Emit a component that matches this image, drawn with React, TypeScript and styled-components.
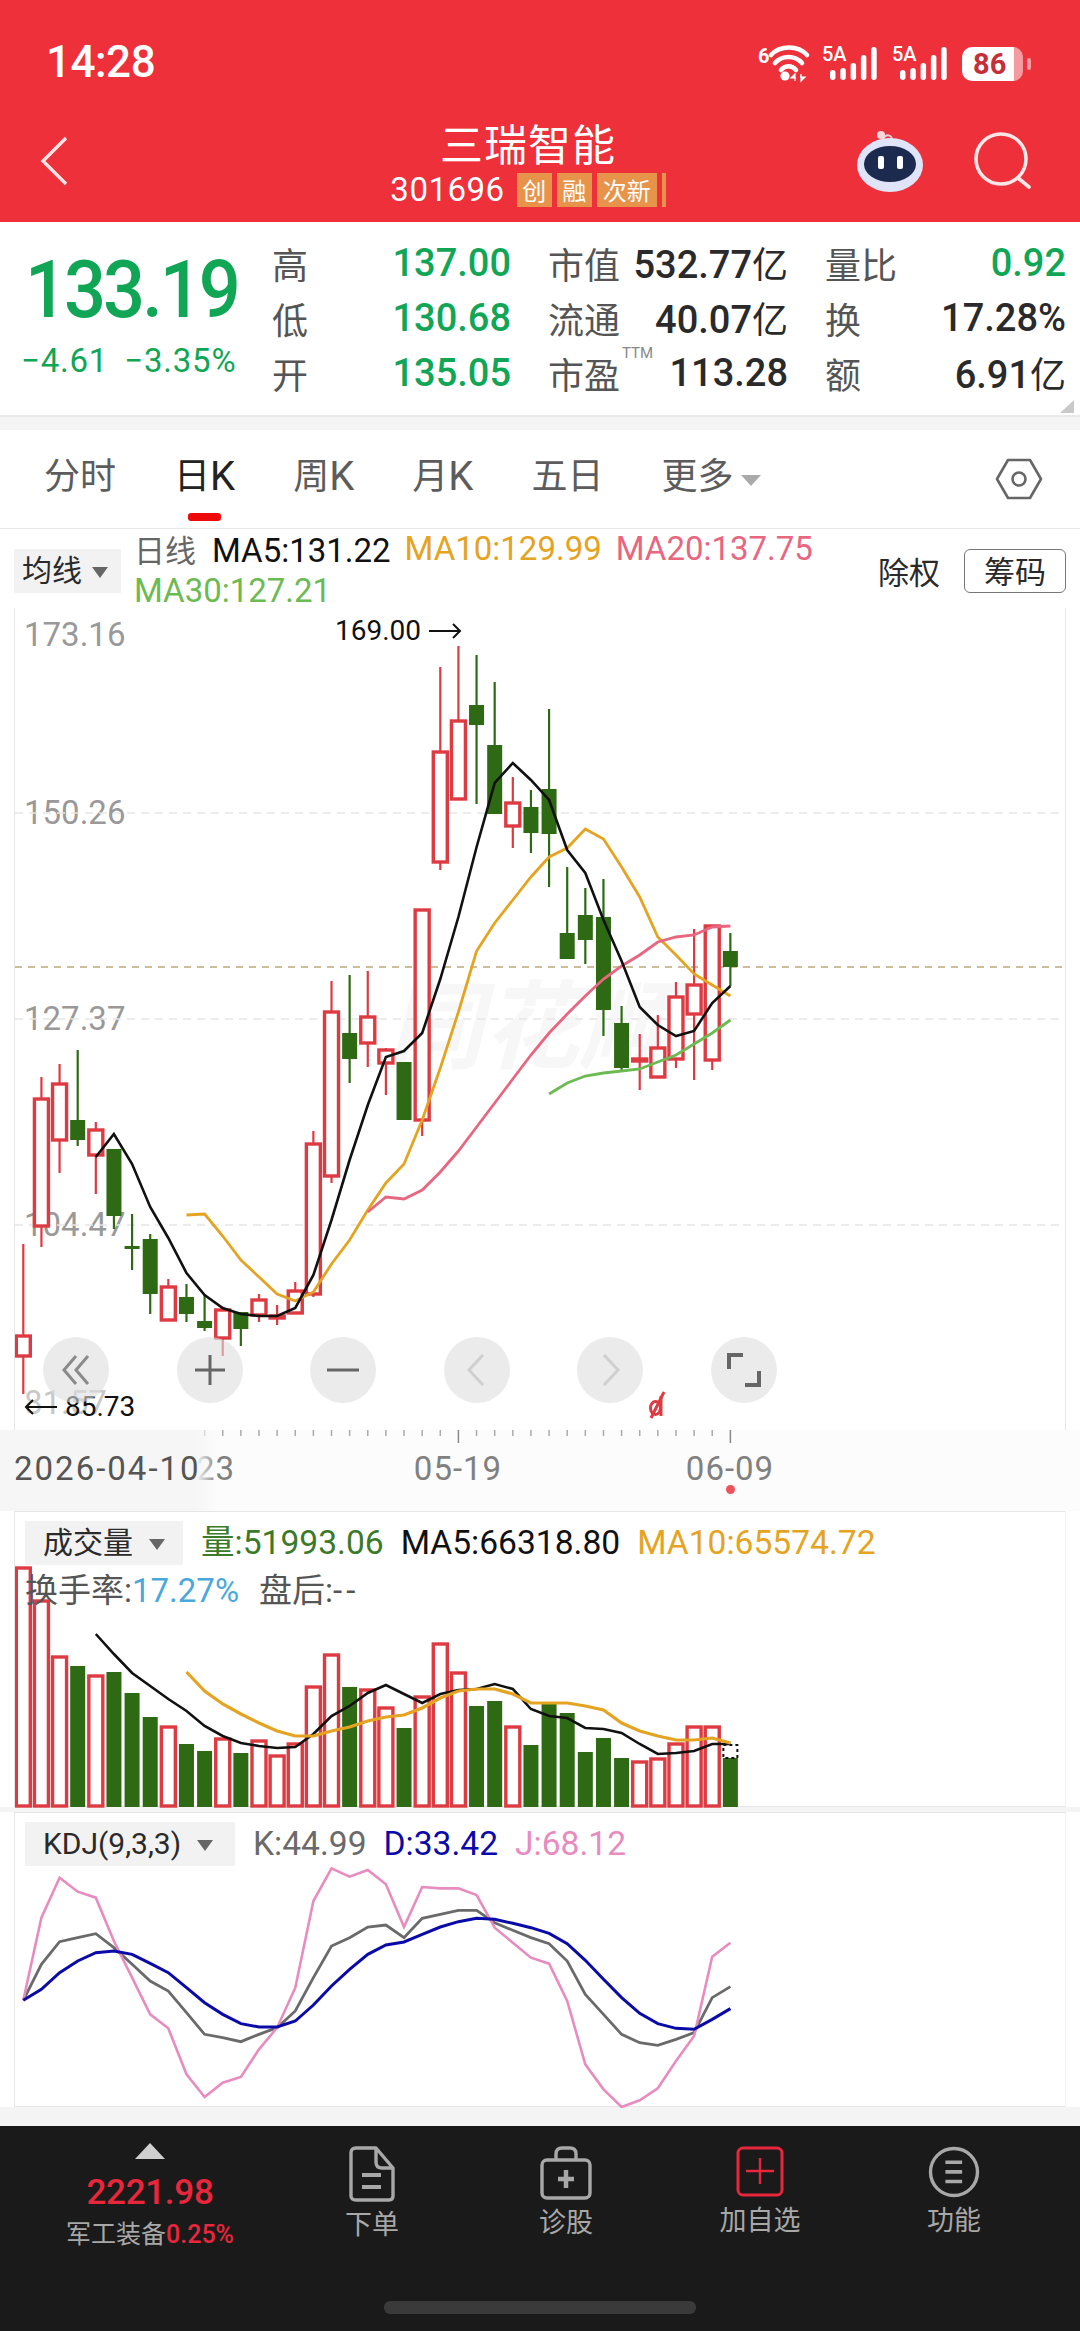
import React from "react";
import { styled, createGlobalStyle } from "styled-components";

const CJK = `"Noto Sans CJK SC", sans-serif`;
const NUM = `Roboto, "Noto Sans CJK SC", sans-serif`;

const GREEN = "#10a656";
const RED_UP = "#dd3a42";
const GREEN_DOWN = "#2e6a14";
const ORANGE = "#e5a322";
const PINK = "#e8667f";
const LIME = "#6cba52";

const GlobalStyle = createGlobalStyle`
  html, body {
    margin: 0;
    padding: 0;
    background: #fff;
    font-family: ${NUM};
  }
`;

const Page = styled.div`
  width: 1080px;
  height: 2331px;
  overflow: hidden;
  display: flex;
  flex-direction: column;
  background: #fff;
`;

/* ---------- red header ---------- */

const Header = styled.header`
  height: 222px;
  background: #ee303a;
  color: #fff;
  flex: none;
`;

const StatusBar = styled.div`
  height: 100px;
  padding: 0 57px 0 46px;
  box-sizing: border-box;
  display: flex;
  align-items: flex-start;
  justify-content: space-between;
`;

const Clock = styled.div`
  margin-top: 40px;
  font: 500 44px/44px Roboto, sans-serif;
  letter-spacing: -0.5px;
`;

const StatusIcons = styled.div`
  margin-top: 45px;
  display: flex;
  align-items: flex-start;
  gap: 12px;
`;

const StatusIcon = styled.svg`
  display: block;
  overflow: visible;
`;

const Battery = styled.div`
  position: relative;
  margin-top: 2px;
  width: 61px;
  height: 34px;
  border-radius: 10px;
  background: linear-gradient(90deg, #fff 86%, #f59aa0 86%);
  color: #c42f3a;
  font: 700 29px/34px Roboto, sans-serif;
  padding-left: 11px;
  box-sizing: border-box;

  &::after {
    content: "";
    position: absolute;
    left: 65px;
    top: 11px;
    width: 4px;
    height: 12px;
    border-radius: 2px;
    background: #f59aa0;
  }
`;

const NavBar = styled.div`
  height: 122px;
  display: grid;
  grid-template-columns: 380px 296px 1fr;
  align-items: center;
`;

const BackSlot = styled.div`
  padding-left: 40px;
  display: flex;
  align-items: center;
`;

const NavTitleBox = styled.div`
  display: flex;
  flex-direction: column;
  align-items: center;
  padding-top: 2px;
`;

const StockName = styled.div`
  font: 400 43px/50px ${CJK};
  letter-spacing: 1px;
  white-space: nowrap;
`;

const CodeRow = styled.div`
  margin-top: 5px;
  display: flex;
  align-items: center;
  gap: 5px;
  white-space: nowrap;
`;

const StockCode = styled.span`
  font: 400 33px/36px Roboto, sans-serif;
  margin-right: 7px;
  letter-spacing: 0.5px;
`;

const Tag = styled.span<{ $w: number }>`
  width: ${(p) => p.$w}px;
  height: 34px;
  background: #e8934a;
  color: #fff;
  font: 400 24px/34px ${CJK};
  text-align: center;
`;

const TagEdge = styled.span`
  width: 4px;
  height: 34px;
  background: #e8934a;
`;

const NavActions = styled.div`
  display: flex;
  justify-content: flex-end;
  align-items: center;
  padding-right: 48px;
  gap: 50px;
`;

/* ---------- quote ---------- */

const Quote = styled.section`
  height: 195px;
  box-sizing: border-box;
  border-bottom: 2px solid #e9e9e9;
  flex: none;
  display: flex;
  padding-top: 14px;
`;

const PriceBlock = styled.div`
  width: 272px;
  flex: none;
  padding-left: 21px;
  box-sizing: border-box;
  color: ${GREEN};
`;

const BigPrice = styled.div`
  font: 500 74px/80px Roboto, sans-serif;
  letter-spacing: -3px;
  margin-top: 14px;
  padding-left: 4px;
  transform: scaleY(1.08);
`;

const Change = styled.div`
  margin-top: 13px;
  display: flex;
  gap: 16px;
  font: 400 33px/36px Roboto, sans-serif;
  letter-spacing: 0.8px;
`;

const QuoteGrid = styled.div`
  display: grid;
  grid-template-columns: 239px 240px 241px;
  grid-auto-rows: 55px;
  column-gap: 37px;
`;

const QuoteCell = styled.div`
  display: flex;
  justify-content: space-between;
  align-items: center;
  white-space: nowrap;
`;

const QuoteLabel = styled.span`
  position: relative;
  font: 400 36px/55px ${CJK};
  color: #555;
`;

const Ttm = styled.sup`
  position: absolute;
  left: 74px;
  top: -2px;
  font: 400 15px/18px Roboto, sans-serif;
  color: #888;
`;

const QuoteValue = styled.span<{ $green?: boolean }>`
  font: 500 38px/55px ${NUM};
  color: ${(p) => (p.$green ? GREEN : "#2a2a2a")};
`;

const Unit = styled.span`
  font: 400 36px/55px ${CJK};
`;

const Corner = styled.div`
  position: absolute;
  left: 1060px;
  top: 400px;
  width: 0;
  height: 0;
  border-left: 14px solid transparent;
  border-bottom: 13px solid #c9c9c9;
`;

const Strip = styled.div<{ $h: number }>`
  height: ${(p) => p.$h}px;
  background: #f4f4f4;
  flex: none;
`;

/* ---------- tabs ---------- */

const Tabs = styled.nav`
  height: 99px;
  box-sizing: border-box;
  border-bottom: 1px solid #e7e7e7;
  padding: 0 36px 0 44px;
  display: flex;
  align-items: flex-start;
  gap: 58px;
  flex: none;
`;

const TabItem = styled.div<{ $active?: boolean }>`
  position: relative;
  padding-top: 22px;
  font: 400 36px/50px ${NUM};
  color: ${(p) => (p.$active ? "#222" : "#5c5c5c")};
  white-space: nowrap;
  display: flex;
  align-items: center;

  ${(p) =>
    p.$active &&
    `&::after {
      content: "";
      position: absolute;
      left: 14px;
      top: 83px;
      width: 33px;
      height: 8px;
      border-radius: 3px;
      background: #ee0a0a;
    }`}
`;

const TabK = styled.span`
  font-size: 40px;
`;

const MoreArrow = styled.span`
  display: inline-block;
  margin: 6px 0 0 8px;
  border-left: 10px solid transparent;
  border-right: 10px solid transparent;
  border-top: 11px solid #aaa;
`;

const TabSetting = styled.div`
  margin-left: auto;
  padding-top: 24px;
  display: flex;
`;

/* ---------- indicator legend ---------- */

const IndicatorBar = styled.div`
  height: 79px;
  flex: none;
  padding: 0 14px;
  display: flex;
  align-items: flex-start;
  gap: 13px;
`;

const DropPill = styled.div<{ $w: number; $gap: number }>`
  flex: none;
  width: ${(p) => p.$w}px;
  height: 44px;
  box-sizing: border-box;
  padding-left: 8px;
  background: #f2f2f2;
  display: flex;
  align-items: center;
  gap: ${(p) => p.$gap}px;
  font: 400 30px/44px ${NUM};
  color: #2a2a2a;
  white-space: nowrap;
`;

const PillLabel = styled.span`
  padding-left: 10px;
`;

const PillArrow = styled.span`
  border-left: 8px solid transparent;
  border-right: 8px solid transparent;
  border-top: 11px solid #666;
  margin-top: 2px;
`;

const PillSlot = styled.div`
  margin-top: 20px;
`;

const Legend = styled.div`
  width: 700px;
  display: flex;
  flex-wrap: wrap;
  column-gap: 14px;
`;

const LegendItem = styled.span<{ $color: string; $size?: number }>`
  font: 400 ${(p) => p.$size ?? 33}px/40px ${NUM};
  color: ${(p) => p.$color};
  white-space: nowrap;
`;

const LegendPrefix = styled.span`
  color: #666;
  font: 400 31px/40px ${CJK};
  margin-right: 16px;
`;

const ChartActions = styled.div`
  margin: 20px 0 0 auto;
  display: flex;
  align-items: center;
  gap: 24px;
  font: 400 31px/44px ${CJK};
  color: #2a2a2a;
`;

const ChipButton = styled.div`
  width: 102px;
  height: 44px;
  box-sizing: border-box;
  border: 1px solid #777;
  border-radius: 6px;
  text-align: center;
  line-height: 40px;
`;

/* ---------- main chart ---------- */

const ChartPanel = styled.section`
  position: relative;
  flex: none;
  height: 822px;
  margin: 0 14px;
  box-sizing: border-box;
  border-left: 1px solid #e6e6e6;
  border-right: 1px solid #e6e6e6;
`;

const Plot = styled.svg`
  position: absolute;
  left: 0;
  top: 0;
  display: block;
`;

const Watermark = styled.div`
  position: absolute;
  left: 372px;
  top: 352px;
  font: italic 700 96px/120px ${CJK};
  color: #f7f7f7;
  white-space: nowrap;
`;

const AxisLabel = styled.div<{ $top: number; $faded?: boolean }>`
  position: absolute;
  left: 9px;
  top: ${(p) => p.$top}px;
  font: 400 33px/40px Roboto, sans-serif;
  color: ${(p) => (p.$faded ? "#c8c8c8" : "#999")};
`;

const ExtremeLabel = styled.div<{ $left: number; $top: number }>`
  position: absolute;
  left: ${(p) => p.$left}px;
  top: ${(p) => p.$top}px;
  display: flex;
  align-items: center;
  gap: 7px;
  font: 400 28px/32px Roboto, sans-serif;
  color: #111;
  white-space: nowrap;
`;

const ChartControls = styled.div`
  position: absolute;
  left: 28px;
  top: 729px;
  display: flex;
  gap: 67.6px;
`;

const RoundButton = styled.div`
  width: 66px;
  height: 66px;
  border-radius: 50%;
  background: rgba(222, 222, 222, 0.6);
  display: flex;
  align-items: center;
  justify-content: center;
`;

/* ---------- date axis ---------- */

const DateAxis = styled.div`
  position: relative;
  height: 81px;
  flex: none;
  background: #fcfcfc;
`;

const DateLabel = styled.div<{ $center: number }>`
  position: absolute;
  left: ${(p) => p.$center}px;
  top: 19px;
  transform: translateX(-50%);
  font: 400 33px/40px Roboto, sans-serif;
  color: #808080;
  letter-spacing: 1px;
`;

const DateFade = styled.div`
  position: absolute;
  left: 0;
  top: 0;
  bottom: 0;
  width: 218px;
  background: linear-gradient(90deg, #f6f6f6 90%, rgba(250, 250, 250, 0));
`;

const StartDate = styled.div`
  position: absolute;
  left: 14px;
  top: 19px;
  font: 400 33px/40px Roboto, sans-serif;
  color: #555;
  letter-spacing: 2px;
`;

const LatestDot = styled.div`
  position: absolute;
  left: 726px;
  top: 55px;
  width: 9px;
  height: 9px;
  border-radius: 50%;
  background: #f0505a;
`;

/* ---------- sub charts ---------- */

const SubPanel = styled.section<{ $h: number }>`
  position: relative;
  flex: none;
  height: ${(p) => p.$h}px;
  margin: 0 14px;
  box-sizing: border-box;
  border: 1px solid #e6e6e6;
  border-right-color: #f2f2f2;
  padding: 9px 0 0 10px;
`;

const SubHead = styled.div`
  position: relative;
  display: flex;
  align-items: center;
  gap: 18px;
`;

const SubExtra = styled.div`
  position: relative;
  margin-top: 8px;
  font: 400 33px/36px ${NUM};
  color: #555;
  display: flex;
  gap: 20px;
`;

const TurnoverRate = styled.span`
  color: #4aa8dc;
`;

const Dashes = styled.span`
  letter-spacing: 4px;
`;

const SubLegend = styled.div`
  display: flex;
  gap: 17px;
`;

/* ---------- footer ---------- */

const Footer = styled.footer`
  flex: 1;
  background: #1a1a1a;
  position: relative;
  display: grid;
  grid-template-columns: 275px repeat(4, 194px);
  align-items: start;
`;

const IndexBox = styled.div`
  padding: 17px 0 0 25px;
  display: flex;
  flex-direction: column;
  align-items: center;
`;

const UpMark = styled.span`
  border-left: 15px solid transparent;
  border-right: 15px solid transparent;
  border-bottom: 16px solid #cfcfcf;
`;

const IndexValue = styled.div`
  margin-top: 14px;
  font: 500 35px/40px Roboto, sans-serif;
  color: #e8263c;
  letter-spacing: -0.3px;
`;

const IndexName = styled.div`
  margin-top: 6px;
  font: 400 25px/32px ${NUM};
  color: #a8a8a8;
  white-space: nowrap;
`;

const RedPct = styled.span`
  color: #e8263c;
  font-weight: 500;
`;

const FooterItem = styled.div`
  padding-top: 20px;
  display: flex;
  flex-direction: column;
  align-items: center;
  gap: 4px;
  color: #a8a8a8;
  font: 400 27px/34px ${CJK};
`;

const HomeBar = styled.div`
  position: absolute;
  left: 384px;
  top: 175px;
  width: 312px;
  height: 13px;
  border-radius: 6px;
  background: #3a3a3a;
`;

/* ---------- chart data, in page pixels as sampled from the screen ---------- */

type Candle = ["r" | "g", number, number, number, number];

const candles: Candle[] = [
  ["r", 1244, 1336, 1356, 1394],
  ["r", 1077, 1099, 1226, 1247],
  ["r", 1064, 1084, 1140, 1173],
  ["g", 1050, 1120, 1140, 1146],
  ["r", 1122, 1130, 1155, 1194],
  ["g", 1149, 1149, 1216, 1229],
  ["g", 1214, 1246, 1249, 1270],
  ["g", 1234, 1239, 1294, 1314],
  ["r", 1279, 1287, 1320, 1320],
  ["g", 1284, 1297, 1314, 1322],
  ["g", 1294, 1321, 1328, 1331],
  ["r", 1310, 1310, 1338, 1356],
  ["g", 1312, 1312, 1329, 1346],
  ["r", 1294, 1300, 1315, 1322],
  ["r", 1305, 1316, 1318, 1325],
  ["r", 1282, 1291, 1313, 1313],
  ["r", 1131, 1144, 1294, 1297],
  ["r", 981, 1012, 1176, 1183],
  ["g", 975, 1033, 1059, 1083],
  ["r", 971, 1017, 1043, 1067],
  ["r", 1048, 1050, 1063, 1095],
  ["g", 1062, 1062, 1120, 1120],
  ["r", 910, 910, 1120, 1136],
  ["r", 667, 752, 862, 870],
  ["r", 646, 721, 799, 799],
  ["g", 655, 705, 725, 804],
  ["g", 682, 745, 814, 814],
  ["r", 777, 803, 826, 848],
  ["g", 790, 807, 833, 853],
  ["g", 709, 789, 834, 887],
  ["g", 867, 933, 959, 959],
  ["g", 888, 915, 940, 964],
  ["g", 879, 917, 1010, 1036],
  ["g", 1006, 1023, 1068, 1072],
  ["r", 1034, 1059, 1061, 1090],
  ["r", 1015, 1048, 1077, 1077],
  ["r", 982, 997, 1059, 1068],
  ["r", 929, 985, 1014, 1080],
  ["r", 925, 926, 1060, 1070],
  ["g", 933, 951, 967, 986],
];

const ma5 = [1157, 1134, 1164, 1207, 1238, 1273, 1295, 1308, 1314, 1316, 1316, 1308, 1275, 1220, 1160, 1105, 1057, 1051, 1033, 979, 917, 847, 783, 763, 780, 800, 850, 873, 920, 961, 1007, 1025, 1036, 1031, 1003, 986];
const ma10 = [1215, 1214, 1236, 1260, 1277, 1294, 1301, 1292, 1264, 1240, 1210, 1183, 1164, 1120, 1068, 1012, 951, 923, 900, 877, 857, 848, 829, 839, 867, 897, 937, 955, 974, 985, 996];
const ma20 = [1212, 1197, 1199, 1190, 1172, 1151, 1127, 1103, 1079, 1055, 1033, 1014, 996, 979, 966, 955, 942, 937, 935, 927, 926];
const ma30 = [1094, 1083, 1076, 1073, 1071, 1069, 1062, 1055, 1044, 1033, 1020];

// type, top of the bar
const volumes: ["r" | "g", number][] = [
  ["r", 1567], ["r", 1600], ["r", 1656], ["g", 1665], ["r", 1675], ["g", 1671], ["g", 1692], ["g", 1716],
  ["r", 1726], ["g", 1743], ["g", 1750], ["r", 1738], ["g", 1752], ["r", 1740], ["r", 1755], ["r", 1743],
  ["r", 1686], ["r", 1654], ["g", 1686], ["r", 1689], ["r", 1707], ["g", 1727], ["r", 1696], ["r", 1643],
  ["r", 1672], ["g", 1705], ["g", 1700], ["r", 1726], ["g", 1744], ["g", 1703], ["g", 1712], ["g", 1751],
  ["g", 1737], ["g", 1757], ["r", 1761], ["r", 1758], ["r", 1743], ["r", 1726], ["r", 1726], ["g", 1757],
];
const volMa5 = [1633, 1653, 1672, 1685, 1698, 1710, 1725, 1735, 1742, 1745, 1747, 1746, 1733, 1715, 1705, 1692, 1684, 1693, 1702, 1693, 1689, 1688, 1683, 1688, 1708, 1715, 1717, 1727, 1728, 1732, 1743, 1753, 1752, 1750, 1743, 1743];
const volMa10 = [1671, 1690, 1703, 1713, 1722, 1730, 1735, 1735, 1730, 1726, 1720, 1716, 1714, 1707, 1697, 1690, 1688, 1688, 1693, 1702, 1702, 1702, 1705, 1709, 1722, 1730, 1735, 1739, 1739, 1737, 1742];

// sampled on a crop at 3x starting at y=1800
const kdjK = [598, 490, 422, 410, 398, 440, 490, 540, 570, 635, 700, 710, 722, 700, 680, 630, 530, 435, 410, 378, 372, 410, 352, 340, 328, 328, 365, 388, 410, 428, 480, 580, 640, 700, 725, 733, 715, 695, 590, 557];
const kdjD = [598, 565, 515, 480, 455, 450, 460, 487, 515, 560, 605, 640, 668, 678, 678, 660, 612, 555, 505, 460, 432, 423, 400, 378, 362, 352, 355, 367, 380, 397, 428, 478, 535, 590, 637, 668, 682, 685, 655, 623];
const kdjJ = [598, 350, 230, 272, 290, 420, 530, 640, 682, 820, 888, 845, 828, 745, 680, 560, 300, 202, 227, 207, 250, 378, 258, 262, 262, 282, 380, 425, 470, 488, 600, 790, 865, 918, 898, 862, 780, 705, 467, 425];

const cx = (i: number) => 23.3 + 18.13 * i;

const toPoints = (ys: number[], start = 0) =>
  ys.map((y, i) => `${cx(start + i).toFixed(1)},${y}`).join(" ");

const kdjPoints = (zs: number[]) => toPoints(zs.map((z) => 1800 + z / 3));

function MainPlot() {
  return (
    <Plot width="1050" height="822" viewBox="15 608 1050 822">
      <g stroke="#e6e6e6" strokeWidth="1.5" strokeDasharray="8 6">
        <line x1="15" x2="1065" y1="813" y2="813" />
        <line x1="15" x2="1065" y1="1019" y2="1019" />
        <line x1="15" x2="1065" y1="1225" y2="1225" />
      </g>
      <line x1="15" x2="1065" y1="967" y2="967" stroke="#bda97a" strokeWidth="1.5" strokeDasharray="7 6" />
      {candles.map(([type, hi, top, bottom, lo], i) => {
        const color = type === "r" ? RED_UP : GREEN_DOWN;
        const x = cx(i);
        return (
          <g key={i}>
            <line x1={x} x2={x} y1={hi} y2={top} stroke={color} strokeWidth="2.2" />
            <line x1={x} x2={x} y1={bottom} y2={lo} stroke={color} strokeWidth="2.2" />
            {type === "r" ? (
              <rect x={x - 7} y={top} width={14} height={bottom - top} fill="#fff" stroke={color} strokeWidth="3.4" />
            ) : (
              <rect x={x - 7.5} y={top} width={15} height={bottom - top} fill={color} />
            )}
          </g>
        );
      })}
      <polyline points={toPoints(ma10, 9)} fill="none" stroke={ORANGE} strokeWidth="2.8" />
      <polyline points={toPoints(ma20, 19)} fill="none" stroke={PINK} strokeWidth="2.8" />
      <polyline points={toPoints(ma30, 29)} fill="none" stroke={LIME} strokeWidth="2.8" />
      <polyline points={toPoints(ma5, 4)} fill="none" stroke="#111" strokeWidth="2.6" />
      <g fill="none" stroke={RED_UP} strokeWidth="3">
        <ellipse cx="655.5" cy="1408" rx="5" ry="6.5" />
        <line x1="664" y1="1392" x2="651" y2="1418" />
        <line x1="661" y1="1396" x2="661" y2="1416" />
      </g>
    </Plot>
  );
}

function VolumePlot() {
  return (
    <Plot width="1050" height="296" viewBox="15 1511 1050 296">
      {volumes.map(([type, top], i) =>
        type === "r" ? (
          <rect key={i} x={cx(i) - 7} y={top} width={14} height={1805 - top} fill="#fff" stroke={RED_UP} strokeWidth="3.4" />
        ) : (
          <rect key={i} x={cx(i) - 7.5} y={top} width={15} height={1806 - top} fill={GREEN_DOWN} />
        ),
      )}
      <rect x={cx(39) - 7} y="1744" width="14" height="13" fill="#fff" stroke="#111" strokeWidth="2" strokeDasharray="3 3" />
      <polyline points={toPoints(volMa5, 4)} fill="none" stroke="#111" strokeWidth="2.6" />
      <polyline points={toPoints(volMa10, 9)} fill="none" stroke={ORANGE} strokeWidth="3.2" />
    </Plot>
  );
}

function KdjPlot() {
  return (
    <Plot width="1050" height="295" viewBox="15 1812 1050 295">
      <polyline points={kdjPoints(kdjK)} fill="none" stroke="#6a6a6a" strokeWidth="2.8" />
      <polyline points={kdjPoints(kdjJ)} fill="none" stroke="#e88bbf" strokeWidth="2.6" />
      <polyline points={kdjPoints(kdjD)} fill="none" stroke="#0a0aa8" strokeWidth="3" />
    </Plot>
  );
}

function Wifi() {
  return (
    <StatusIcon width="52" height="37" viewBox="0 0 52 37">
      <text x="0" y="18" fontFamily="Roboto, sans-serif" fontSize="20" fontWeight="700" fill="#fff">6</text>
      <g fill="none" stroke="#fff" strokeWidth="4.6" strokeLinecap="round">
        <path d="M13 10 C22 0 40 0 49 10" />
        <path d="M17 18 C24 10 37 10 44 18" />
        <path d="M23 25 C27 20 34 20 38 25" />
      </g>
      <circle cx="27" cy="31" r="4.6" fill="#fff" />
      <path d="M37 36 v-7 l-4 4 h5 M43 29 v7 l4 -4 h-5" fill="#fff" stroke="#fff" strokeWidth="1.2" />
    </StatusIcon>
  );
}

function Signal() {
  const bars = [10, 12, 17, 25, 33];
  return (
    <StatusIcon width="58" height="36" viewBox="0 0 58 36">
      <text x="0" y="16" fontFamily="Roboto, sans-serif" fontSize="20" fontWeight="500" fill="#fff">5A</text>
      {bars.map((h, i) => (
        <rect key={i} x={8 + i * 10.3} y={35 - h} width="5.5" height={h} rx="2.7" fill="#fff" />
      ))}
    </StatusIcon>
  );
}

function Robot() {
  return (
    <svg width="68" height="64" viewBox="0 0 68 64">
      <path d="M27 10 C30 4 36 6 36 11" fill="none" stroke="#f3c9d2" strokeWidth="2" />
      <circle cx="25" cy="6" r="4" fill="#f6d7dc" />
      <ellipse cx="34" cy="36" rx="33" ry="27" fill="#dfe4f8" />
      <ellipse cx="34" cy="35" rx="26" ry="18" fill="#1d2a4f" />
      <rect x="22" y="27" width="6" height="13" rx="2" fill="#fff" />
      <rect x="41" y="27" width="6" height="13" rx="2" fill="#fff" />
    </svg>
  );
}

function Hexagon() {
  return (
    <svg width="50" height="50" viewBox="0 0 50 50" fill="none" stroke="#666" strokeWidth="2.6">
      <path d="M14 6 H36 L47 25 L36 44 H14 L3 25 Z" strokeLinejoin="round" />
      <circle cx="25" cy="25" r="6.5" />
    </svg>
  );
}

function LongArrow({ left }: { left?: boolean }) {
  return (
    <svg width="34" height="18" viewBox="0 0 34 18" fill="none" stroke="#111" strokeWidth="2">
      {left ? <path d="M33 9 H2 M9 2 L2 9 L9 16" /> : <path d="M1 9 H32 M25 2 L32 9 L25 16" />}
    </svg>
  );
}

const controlIcons = [
  <path key="a" d="M21 7 L9 21 L21 35 M33 7 L21 21 L33 35" stroke="#8a8a8a" />,
  <path key="b" d="M21 6 V36 M6 21 H36" stroke="#666" />,
  <path key="c" d="M5 21 H37" stroke="#666" />,
  <path key="d" d="M27 6 L13 21 L27 36" stroke="#cfcfcf" />,
  <path key="e" d="M15 6 L29 21 L15 36" stroke="#cfcfcf" />,
  <path key="f" d="M20 6 H6 V20 M22 36 H36 V22" stroke="#666" strokeWidth="4" />,
];

function DocIcon() {
  return (
    <svg width="48" height="56" viewBox="0 0 48 56" fill="none" stroke="#a8a8a8" strokeWidth="3.4">
      <path d="M8 2 H28 L45 22 V50 Q45 54 41 54 H8 Q3 54 3 50 V7 Q3 2 8 2 Z M28 2 V16 Q28 22 34 22 H45" strokeLinejoin="round" />
      <path d="M14 29 H33 M14 41 H33" strokeWidth="4" />
    </svg>
  );
}

function BagIcon() {
  return (
    <svg width="52" height="54" viewBox="0 0 52 54" fill="none" stroke="#a8a8a8" strokeWidth="3.4">
      <path d="M16 14 V8 Q16 2 22 2 H30 Q36 2 36 8 V14" />
      <rect x="2" y="14" width="48" height="38" rx="5" />
      <path d="M26 24 V42 M18 33 H34" strokeWidth="4.5" />
    </svg>
  );
}

function AddIcon() {
  return (
    <svg width="48" height="52" viewBox="0 0 48 52" fill="none" stroke="#e8263c" strokeWidth="3">
      <rect x="2" y="2" width="44" height="47" rx="5" />
      <path d="M24 12 V38 M10 25 H38" strokeWidth="2.4" />
    </svg>
  );
}

function MenuIcon() {
  return (
    <svg width="52" height="52" viewBox="0 0 52 52" fill="none" stroke="#a8a8a8" strokeWidth="3.4">
      <circle cx="26" cy="26" r="23.5" />
      <path d="M15 15 H37 M15 26 H37 M15 37 H37" transform="translate(6 3) scale(.76 .88)" strokeWidth="4" />
    </svg>
  );
}

export default function App() {
  return (
    <Page>
      <GlobalStyle />
      <Header>
        <StatusBar>
          <Clock>14:28</Clock>
          <StatusIcons>
            <Wifi />
            <Signal />
            <Signal />
            <Battery>86</Battery>
          </StatusIcons>
        </StatusBar>
        <NavBar>
          <BackSlot>
            <svg width="28" height="50" viewBox="0 0 28 50" fill="none" stroke="#fbe3e4" strokeWidth="3.4">
              <path d="M26 2 L3 25 L26 48" />
            </svg>
          </BackSlot>
          <NavTitleBox>
            <StockName>三瑞智能</StockName>
            <CodeRow>
              <StockCode>301696</StockCode>
              <Tag $w={35}>创</Tag>
              <Tag $w={35}>融</Tag>
              <Tag $w={60}>次新</Tag>
              <TagEdge />
            </CodeRow>
          </NavTitleBox>
          <NavActions>
            <Robot />
            <svg width="58" height="58" viewBox="0 0 58 58" fill="none" stroke="#fbe6e7" strokeWidth="3.6">
              <circle cx="27" cy="27" r="25" />
              <path d="M44 46 L55 55" strokeLinecap="round" />
            </svg>
          </NavActions>
        </NavBar>
      </Header>

      <Quote>
        <PriceBlock>
          <BigPrice>133.19</BigPrice>
          <Change>
            <span>−4.61</span>
            <span>−3.35%</span>
          </Change>
        </PriceBlock>
        <QuoteGrid>
          <QuoteCell>
            <QuoteLabel>高</QuoteLabel>
            <QuoteValue $green>137.00</QuoteValue>
          </QuoteCell>
          <QuoteCell>
            <QuoteLabel>市值</QuoteLabel>
            <QuoteValue>532.77<Unit>亿</Unit></QuoteValue>
          </QuoteCell>
          <QuoteCell>
            <QuoteLabel>量比</QuoteLabel>
            <QuoteValue $green>0.92</QuoteValue>
          </QuoteCell>
          <QuoteCell>
            <QuoteLabel>低</QuoteLabel>
            <QuoteValue $green>130.68</QuoteValue>
          </QuoteCell>
          <QuoteCell>
            <QuoteLabel>流通</QuoteLabel>
            <QuoteValue>40.07<Unit>亿</Unit></QuoteValue>
          </QuoteCell>
          <QuoteCell>
            <QuoteLabel>换</QuoteLabel>
            <QuoteValue>17.28%</QuoteValue>
          </QuoteCell>
          <QuoteCell>
            <QuoteLabel>开</QuoteLabel>
            <QuoteValue $green>135.05</QuoteValue>
          </QuoteCell>
          <QuoteCell>
            <QuoteLabel>市盈<Ttm>TTM</Ttm></QuoteLabel>
            <QuoteValue>113.28</QuoteValue>
          </QuoteCell>
          <QuoteCell>
            <QuoteLabel>额</QuoteLabel>
            <QuoteValue>6.91<Unit>亿</Unit></QuoteValue>
          </QuoteCell>
        </QuoteGrid>
        <Corner />
      </Quote>
      <Strip $h={13} />

      <Tabs>
        <TabItem>分时</TabItem>
        <TabItem $active>日<TabK>K</TabK></TabItem>
        <TabItem>周<TabK>K</TabK></TabItem>
        <TabItem>月<TabK>K</TabK></TabItem>
        <TabItem>五日</TabItem>
        <TabItem>更多<MoreArrow /></TabItem>
        <TabSetting><Hexagon /></TabSetting>
      </Tabs>

      <IndicatorBar>
        <PillSlot>
          <DropPill $w={107} $gap={10}>均线<PillArrow /></DropPill>
        </PillSlot>
        <Legend>
          <LegendItem $color="#111"><LegendPrefix>日线</LegendPrefix>MA5:131.22</LegendItem>
          <LegendItem $color={ORANGE}>MA10:129.99</LegendItem>
          <LegendItem $color={PINK}>MA20:137.75</LegendItem>
          <LegendItem $color={LIME}>MA30:127.21</LegendItem>
        </Legend>
        <ChartActions>
          <span>除权</span>
          <ChipButton>筹码</ChipButton>
        </ChartActions>
      </IndicatorBar>

      <ChartPanel>
        <Watermark>同花顺</Watermark>
        <AxisLabel $top={7}>173.16</AxisLabel>
        <AxisLabel $top={185}>150.26</AxisLabel>
        <AxisLabel $top={391}>127.37</AxisLabel>
        <AxisLabel $top={597}>104.47</AxisLabel>
        <AxisLabel $top={775} $faded>81.57</AxisLabel>
        <MainPlot />
        <ExtremeLabel $left={320} $top={7}>169.00<LongArrow /></ExtremeLabel>
        <ExtremeLabel $left={9} $top={783}><LongArrow left />85.73</ExtremeLabel>
        <ChartControls>
          {controlIcons.map((icon, i) => (
            <RoundButton key={i}>
              <svg width="42" height="42" viewBox="0 0 42 42" fill="none" strokeWidth="3">
                {icon}
              </svg>
            </RoundButton>
          ))}
        </ChartControls>
      </ChartPanel>

      <DateAxis>
        <Plot width="1080" height="16" viewBox="0 1430 1080 16">
          {candles.map((_, i) => (
            <line
              key={i}
              x1={cx(i)}
              x2={cx(i)}
              y1="1430"
              y2={i === 24 || i === 39 ? 1443 : 1436}
              stroke={i === 24 || i === 39 ? "#888" : "#aaa"}
              strokeWidth="1.5"
            />
          ))}
        </Plot>
        <DateLabel $center={191}>04-23</DateLabel>
        <DateFade />
        <StartDate>2026-04-10</StartDate>
        <DateLabel $center={458}>05-19</DateLabel>
        <DateLabel $center={730}>06-09</DateLabel>
        <LatestDot />
      </DateAxis>

      <SubPanel $h={296}>
        <VolumePlot />
        <SubHead>
          <DropPill $w={158} $gap={16}>
            <PillLabel>成交量</PillLabel>
            <PillArrow />
          </DropPill>
          <SubLegend>
            <LegendItem $color="#3a7a2a" $size={33.6}>量:51993.06</LegendItem>
            <LegendItem $color="#111" $size={33.6}>MA5:66318.80</LegendItem>
            <LegendItem $color={ORANGE} $size={33.6}>MA10:65574.72</LegendItem>
          </SubLegend>
        </SubHead>
        <SubExtra>
          <span>换手率:<TurnoverRate>17.27%</TurnoverRate></span>
          <span>盘后:<Dashes>--</Dashes></span>
        </SubExtra>
      </SubPanel>
      <Strip $h={5} />
      <SubPanel $h={295}>
        <KdjPlot />
        <SubHead>
          <DropPill $w={210} $gap={16}>
            <PillLabel>KDJ(9,3,3)</PillLabel>
            <PillArrow />
          </DropPill>
          <SubLegend>
            <LegendItem $color="#6a6a6a" $size={33.6}>K:44.99</LegendItem>
            <LegendItem $color="#0a0aa8" $size={33.6}>D:33.42</LegendItem>
            <LegendItem $color="#e88bbf" $size={33.6}>J:68.12</LegendItem>
          </SubLegend>
        </SubHead>
      </SubPanel>
      <Strip $h={19} />

      <Footer>
        <IndexBox>
          <UpMark />
          <IndexValue>2221.98</IndexValue>
          <IndexName>军工装备<RedPct>0.25%</RedPct></IndexName>
        </IndexBox>
        <FooterItem><DocIcon />下单</FooterItem>
        <FooterItem><BagIcon />诊股</FooterItem>
        <FooterItem><AddIcon />加自选</FooterItem>
        <FooterItem><MenuIcon />功能</FooterItem>
        <HomeBar />
      </Footer>
    </Page>
  );
}
